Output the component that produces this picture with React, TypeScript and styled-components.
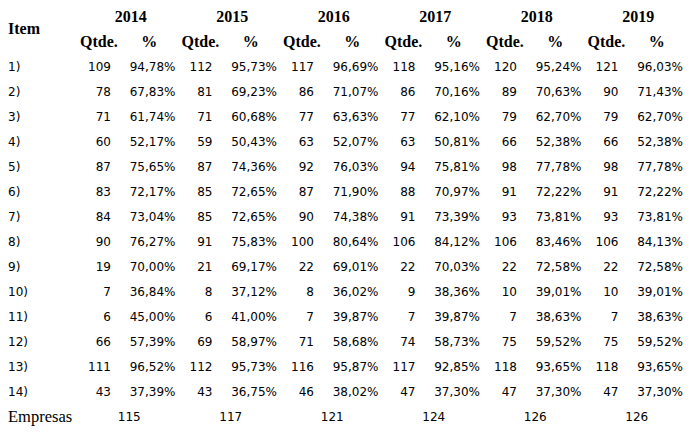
import styled, { createGlobalStyle } from "styled-components";

const GlobalStyle = createGlobalStyle`
  html, body {
    margin: 0;
    padding: 0;
    background: #ffffff;
  }
`;

const years = ["2014", "2015", "2016", "2017", "2018", "2019"];

const rows: [string, ...string[]][] = [
  ["1)", "109", "94,78%", "112", "95,73%", "117", "96,69%", "118", "95,16%", "120", "95,24%", "121", "96,03%"],
  ["2)", "78", "67,83%", "81", "69,23%", "86", "71,07%", "86", "70,16%", "89", "70,63%", "90", "71,43%"],
  ["3)", "71", "61,74%", "71", "60,68%", "77", "63,63%", "77", "62,10%", "79", "62,70%", "79", "62,70%"],
  ["4)", "60", "52,17%", "59", "50,43%", "63", "52,07%", "63", "50,81%", "66", "52,38%", "66", "52,38%"],
  ["5)", "87", "75,65%", "87", "74,36%", "92", "76,03%", "94", "75,81%", "98", "77,78%", "98", "77,78%"],
  ["6)", "83", "72,17%", "85", "72,65%", "87", "71,90%", "88", "70,97%", "91", "72,22%", "91", "72,22%"],
  ["7)", "84", "73,04%", "85", "72,65%", "90", "74,38%", "91", "73,39%", "93", "73,81%", "93", "73,81%"],
  ["8)", "90", "76,27%", "91", "75,83%", "100", "80,64%", "106", "84,12%", "106", "83,46%", "106", "84,13%"],
  ["9)", "19", "70,00%", "21", "69,17%", "22", "69,01%", "22", "70,03%", "22", "72,58%", "22", "72,58%"],
  ["10)", "7", "36,84%", "8", "37,12%", "8", "36,02%", "9", "38,36%", "10", "39,01%", "10", "39,01%"],
  ["11)", "6", "45,00%", "6", "41,00%", "7", "39,87%", "7", "39,87%", "7", "38,63%", "7", "38,63%"],
  ["12)", "66", "57,39%", "69", "58,97%", "71", "58,68%", "74", "58,73%", "75", "59,52%", "75", "59,52%"],
  ["13)", "111", "96,52%", "112", "95,73%", "116", "95,87%", "117", "92,85%", "118", "93,65%", "118", "93,65%"],
  ["14)", "43", "37,39%", "43", "36,75%", "46", "38,02%", "47", "37,30%", "47", "37,30%", "47", "37,30%"],
];

const totals = ["115", "117", "121", "124", "126", "126"];

const Table = styled.table`
  margin-top: 4px;
  border-collapse: collapse;
  border-spacing: 0;
  table-layout: fixed;
  width: 689px;
  color: #000000;
`;

const HeadCell = styled.th<{ $left?: boolean }>`
  height: 25px;
  padding: 0 0 0 ${(p) => (p.$left ? "8px" : "0")};
  text-align: ${(p) => (p.$left ? "left" : "center")};
  vertical-align: middle;
  font-family: "Liberation Serif", "Times New Roman", serif;
  font-size: 16px;
  font-weight: bold;
  white-space: nowrap;
`;

const ItemCell = styled.td`
  height: 25px;
  padding: 0 0 0 8px;
  text-align: left;
  vertical-align: middle;
  font-family: "DejaVu Sans", Verdana, sans-serif;
  font-size: 12px;
  white-space: nowrap;
`;

const LabelCell = styled(ItemCell)`
  font-family: "Liberation Serif", "Times New Roman", serif;
  font-size: 16.5px;
`;

const NumCell = styled.td<{ $center?: boolean }>`
  height: 25px;
  padding: 0 ${(p) => (p.$center ? "3px" : "6px")} 0 0;
  text-align: ${(p) => (p.$center ? "center" : "right")};
  vertical-align: middle;
  font-family: "DejaVu Sans", Verdana, sans-serif;
  font-size: 12px;
  white-space: nowrap;
`;

export default function App() {
  return (
    <>
      <GlobalStyle />
      <Table>
        <colgroup>
          <col style={{ width: 80 }} />
          {years.map((y) => [
            <col key={y + "q"} style={{ width: 37 }} />,
            <col key={y + "p"} style={{ width: 64.5 }} />,
          ])}
        </colgroup>
        <thead>
          <tr>
            <HeadCell $left rowSpan={2}>
              Item
            </HeadCell>
            {years.map((y) => (
              <HeadCell key={y} colSpan={2}>
                {y}
              </HeadCell>
            ))}
          </tr>
          <tr>
            {years.map((y) => [
              <HeadCell key={y + "q"}>Qtde.</HeadCell>,
              <HeadCell key={y + "p"}>%</HeadCell>,
            ])}
          </tr>
        </thead>
        <tbody>
          {rows.map(([item, ...values]) => (
            <tr key={item}>
              <ItemCell>{item}</ItemCell>
              {values.map((v, i) => (
                <NumCell key={i}>{v}</NumCell>
              ))}
            </tr>
          ))}
          <tr>
            <LabelCell>Empresas</LabelCell>
            {totals.map((t, i) => (
              <NumCell key={i} colSpan={2} $center>
                {t}
              </NumCell>
            ))}
          </tr>
        </tbody>
      </Table>
    </>
  );
}
